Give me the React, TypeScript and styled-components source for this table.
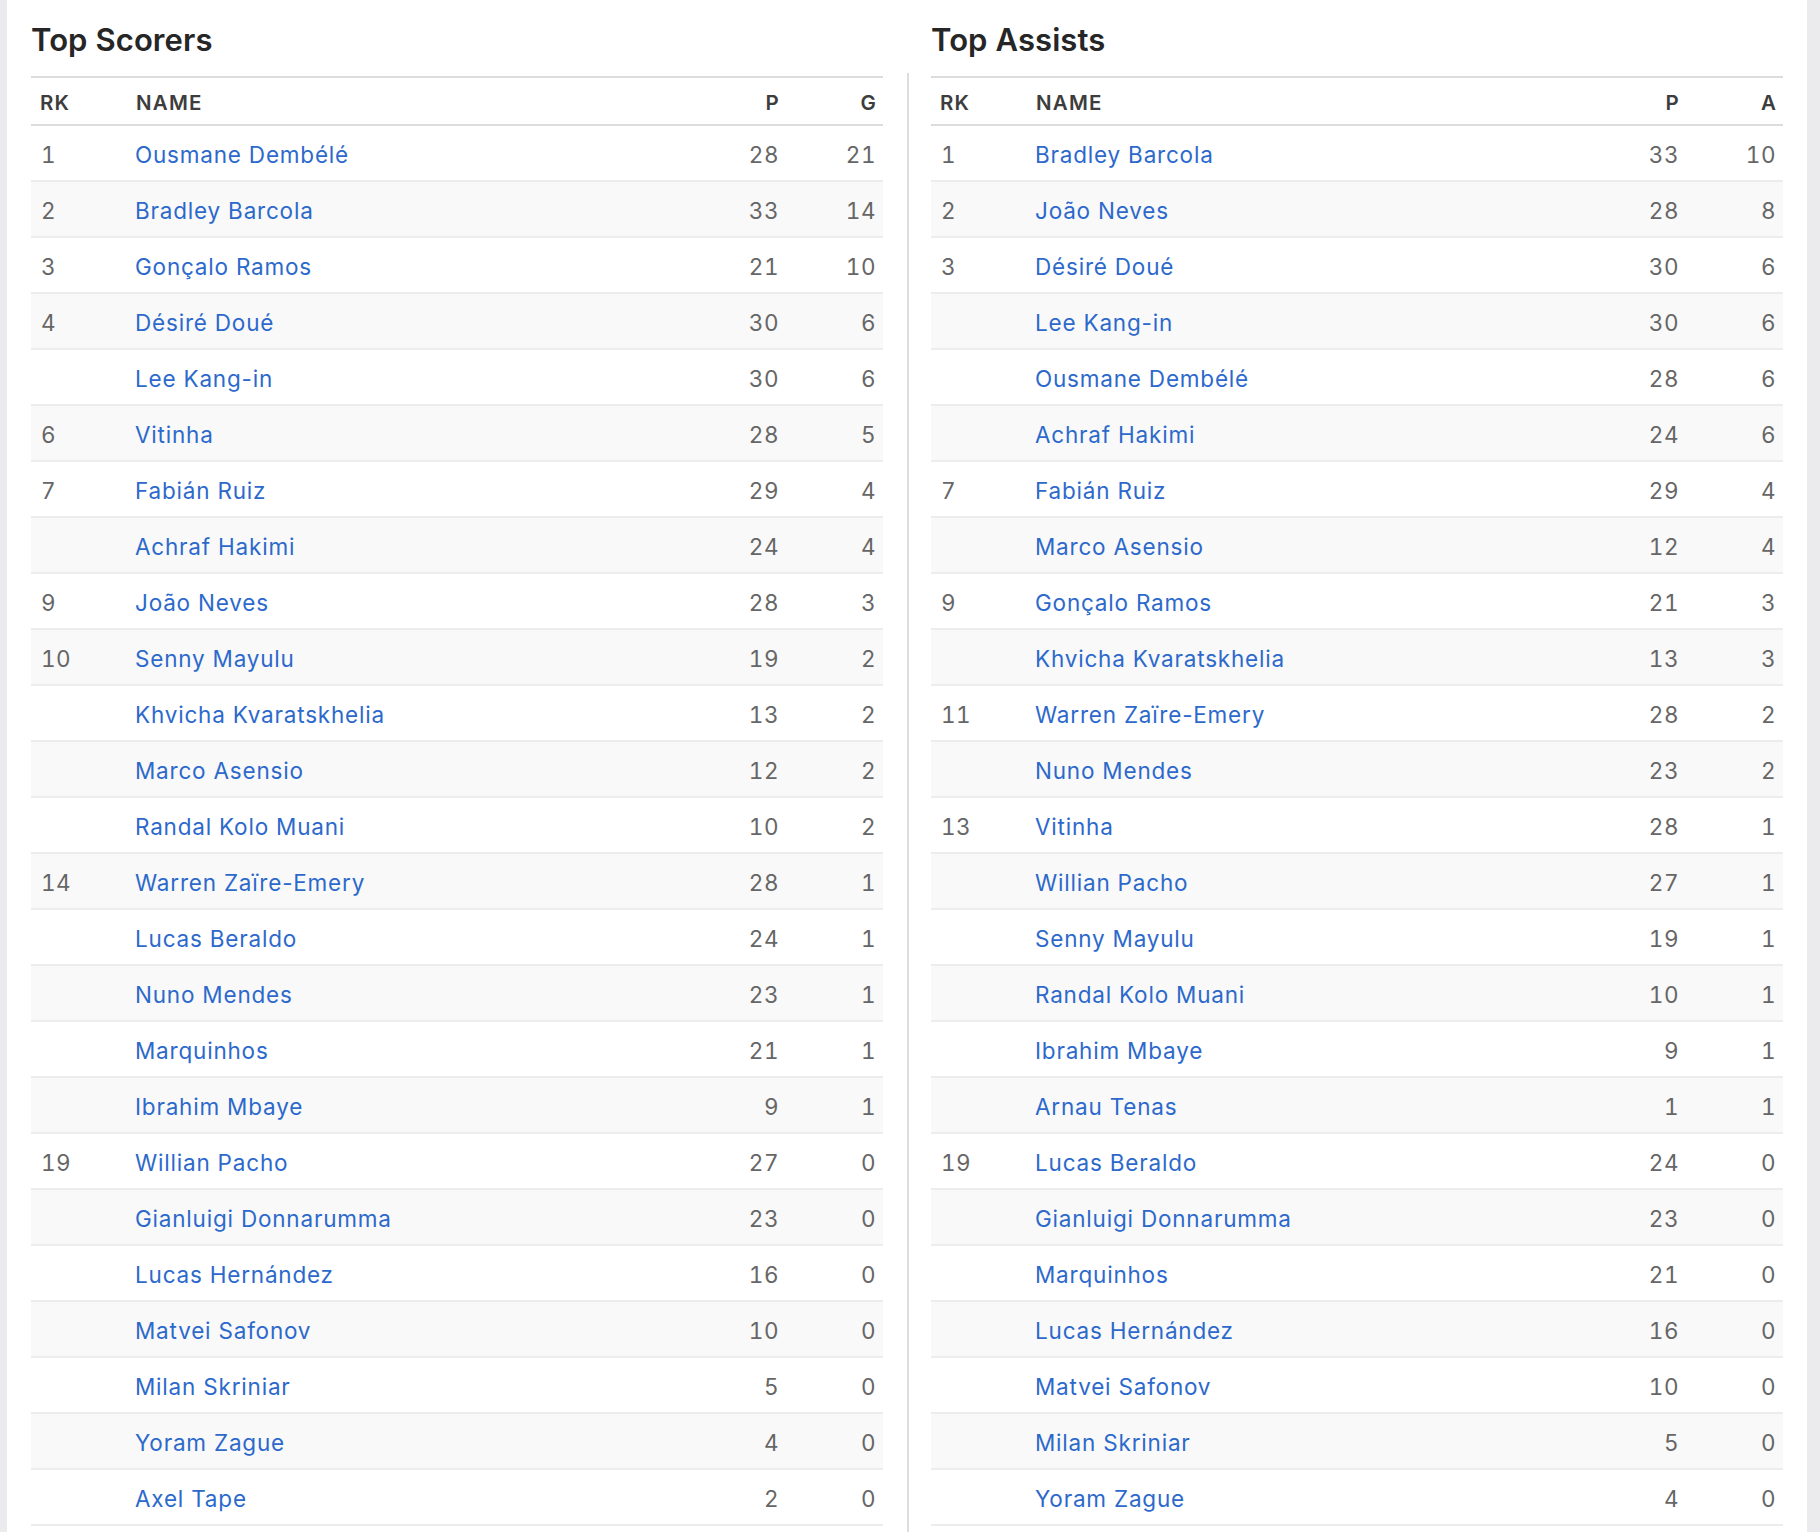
import React from "react";
import styled, { createGlobalStyle } from "styled-components";

const GlobalStyle = createGlobalStyle`
  html, body {
    margin: 0;
    padding: 0;
    background: #ebebee;
  }
  body {
    font-family: Inter, "Noto Sans", "Liberation Sans", sans-serif;
    -webkit-font-smoothing: antialiased;
  }
  * { box-sizing: border-box; }
`;

type Row = { rk: string; name: string; p: number; v: number };

const scorers: Row[] = [
  { rk: "1", name: "Ousmane Dembélé", p: 28, v: 21 },
  { rk: "2", name: "Bradley Barcola", p: 33, v: 14 },
  { rk: "3", name: "Gonçalo Ramos", p: 21, v: 10 },
  { rk: "4", name: "Désiré Doué", p: 30, v: 6 },
  { rk: "", name: "Lee Kang-in", p: 30, v: 6 },
  { rk: "6", name: "Vitinha", p: 28, v: 5 },
  { rk: "7", name: "Fabián Ruiz", p: 29, v: 4 },
  { rk: "", name: "Achraf Hakimi", p: 24, v: 4 },
  { rk: "9", name: "João Neves", p: 28, v: 3 },
  { rk: "10", name: "Senny Mayulu", p: 19, v: 2 },
  { rk: "", name: "Khvicha Kvaratskhelia", p: 13, v: 2 },
  { rk: "", name: "Marco Asensio", p: 12, v: 2 },
  { rk: "", name: "Randal Kolo Muani", p: 10, v: 2 },
  { rk: "14", name: "Warren Zaïre-Emery", p: 28, v: 1 },
  { rk: "", name: "Lucas Beraldo", p: 24, v: 1 },
  { rk: "", name: "Nuno Mendes", p: 23, v: 1 },
  { rk: "", name: "Marquinhos", p: 21, v: 1 },
  { rk: "", name: "Ibrahim Mbaye", p: 9, v: 1 },
  { rk: "19", name: "Willian Pacho", p: 27, v: 0 },
  { rk: "", name: "Gianluigi Donnarumma", p: 23, v: 0 },
  { rk: "", name: "Lucas Hernández", p: 16, v: 0 },
  { rk: "", name: "Matvei Safonov", p: 10, v: 0 },
  { rk: "", name: "Milan Skriniar", p: 5, v: 0 },
  { rk: "", name: "Yoram Zague", p: 4, v: 0 },
  { rk: "", name: "Axel Tape", p: 2, v: 0 },
];

const assists: Row[] = [
  { rk: "1", name: "Bradley Barcola", p: 33, v: 10 },
  { rk: "2", name: "João Neves", p: 28, v: 8 },
  { rk: "3", name: "Désiré Doué", p: 30, v: 6 },
  { rk: "", name: "Lee Kang-in", p: 30, v: 6 },
  { rk: "", name: "Ousmane Dembélé", p: 28, v: 6 },
  { rk: "", name: "Achraf Hakimi", p: 24, v: 6 },
  { rk: "7", name: "Fabián Ruiz", p: 29, v: 4 },
  { rk: "", name: "Marco Asensio", p: 12, v: 4 },
  { rk: "9", name: "Gonçalo Ramos", p: 21, v: 3 },
  { rk: "", name: "Khvicha Kvaratskhelia", p: 13, v: 3 },
  { rk: "11", name: "Warren Zaïre-Emery", p: 28, v: 2 },
  { rk: "", name: "Nuno Mendes", p: 23, v: 2 },
  { rk: "13", name: "Vitinha", p: 28, v: 1 },
  { rk: "", name: "Willian Pacho", p: 27, v: 1 },
  { rk: "", name: "Senny Mayulu", p: 19, v: 1 },
  { rk: "", name: "Randal Kolo Muani", p: 10, v: 1 },
  { rk: "", name: "Ibrahim Mbaye", p: 9, v: 1 },
  { rk: "", name: "Arnau Tenas", p: 1, v: 1 },
  { rk: "19", name: "Lucas Beraldo", p: 24, v: 0 },
  { rk: "", name: "Gianluigi Donnarumma", p: 23, v: 0 },
  { rk: "", name: "Marquinhos", p: 21, v: 0 },
  { rk: "", name: "Lucas Hernández", p: 16, v: 0 },
  { rk: "", name: "Matvei Safonov", p: 10, v: 0 },
  { rk: "", name: "Milan Skriniar", p: 5, v: 0 },
  { rk: "", name: "Yoram Zague", p: 4, v: 0 },
];

const Page = styled.div`
  margin: 0 13px 0 7px;
  min-height: 100vh;
  background: #ffffff;
  padding: 0 24px;
  display: grid;
  grid-template-columns: 878px 1fr;
`;

const Section = styled.section`
  display: flex;
  flex-direction: column;
  min-width: 0;
`;

const Title = styled.h2<{ $side: "left" | "right" }>`
  margin: 22px 0 15px;
  padding-left: ${(p) => (p.$side === "right" ? "22px" : "0")};
  font-size: 31px;
  line-height: 36px;
  font-weight: 600;
  color: #262626;
  letter-spacing: 0.1px;
`;

const TableWrap = styled.div<{ $side: "left" | "right" }>`
  padding-top: 3px;
  padding-bottom: 6px;
  ${(p) =>
    p.$side === "left"
      ? "padding-right: 24px; border-right: 2px solid #dddddd;"
      : "padding-left: 22px;"}
`;

const Table = styled.div`
  border-top: 2px solid #dcdcdc;
`;

const HeadRow = styled.div`
  display: grid;
  grid-template-columns: 96px 1fr 97px 97px;
  height: 48px;
  padding-top: 3px;
  align-items: center;
  border-bottom: 2px solid #dcdcdc;
`;

const HeadCell = styled.div<{ $align?: "left" | "right" }>`
  padding: 0 ${(p) => (p.$align === "right" ? "6px" : "9px")};
  text-align: ${(p) => p.$align ?? "left"};
  font-size: 20.5px;
  font-weight: 600;
  letter-spacing: 1.2px;
  color: #3d3d3d;
  text-transform: uppercase;
`;

const BodyRow = styled.div<{ $striped: boolean }>`
  display: grid;
  grid-template-columns: 96px 1fr 97px 97px;
  height: 56px;
  align-items: center;
  padding-top: 3px;
  background: ${(p) => (p.$striped ? "#f9f9f9" : "#ffffff")};
  border-bottom: 2px solid #ededed;
`;

const Cell = styled.div<{ $align?: "left" | "right" }>`
  padding: 0 ${(p) => (p.$align === "right" ? "7px" : "10px")};
  text-align: ${(p) => p.$align ?? "left"};
  font-size: 22.5px;
  letter-spacing: 0.5px;
  font-variant-numeric: tabular-nums;
  color: #666666;
  white-space: nowrap;
`;

const NameCell = styled.div`
  padding: 0 8px;
  white-space: nowrap;
`;

const PlayerLink = styled.a`
  font-size: 22.5px;
  color: #2c69cb;
  text-decoration: none;
  letter-spacing: 0.8px;
`;

function StatsTable({
  title,
  stat,
  rows,
  side,
}: {
  title: string;
  stat: string;
  rows: Row[];
  side: "left" | "right";
}) {
  return (
    <Section>
      <Title $side={side}>{title}</Title>
      <TableWrap $side={side}>
        <Table>
          <HeadRow>
            <HeadCell>RK</HeadCell>
            <HeadCell>Name</HeadCell>
            <HeadCell $align="right">P</HeadCell>
            <HeadCell $align="right">{stat}</HeadCell>
          </HeadRow>
          {rows.map((r, i) => (
            <BodyRow key={r.name} $striped={i % 2 === 1}>
              <Cell>{r.rk}</Cell>
              <NameCell>
                <PlayerLink href="#">{r.name}</PlayerLink>
              </NameCell>
              <Cell $align="right">{r.p}</Cell>
              <Cell $align="right">{r.v}</Cell>
            </BodyRow>
          ))}
        </Table>
      </TableWrap>
    </Section>
  );
}

export default function App() {
  return (
    <>
      <GlobalStyle />
      <Page>
        <StatsTable title="Top Scorers" stat="G" rows={scorers} side="left" />
        <StatsTable title="Top Assists" stat="A" rows={assists} side="right" />
      </Page>
    </>
  );
}
